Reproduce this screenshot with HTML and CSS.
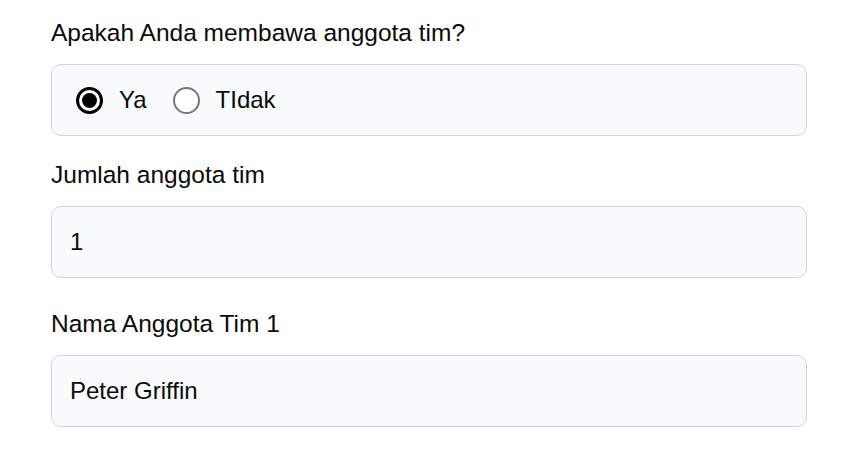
FILE: index.html
```html
<!DOCTYPE html>
<html lang="id">
<head>
<meta charset="utf-8">
<link rel="stylesheet" href="styles.css">
</head>
<body>
<form class="form">
  <div class="field field-first">
    <div class="label">Apakah Anda membawa anggota tim?</div>
    <div class="box radios">
      <label class="radio"><span class="dot checked"></span><span>Ya</span></label>
      <label class="radio"><span class="dot"></span><span>TIdak</span></label>
    </div>
  </div>
  <div class="field field-second">
    <div class="label">Jumlah anggota tim</div>
    <div class="box input">1</div>
  </div>
  <div class="field field-third">
    <div class="label">Nama Anggota Tim 1</div>
    <div class="box input">Peter Griffin</div>
  </div>
</form>
</body>
</html>
```
FILE: styles.css
```css
html, body {
  margin: 0;
  padding: 0;
  background: #ffffff;
}
body {
  font-family: "Liberation Sans", Arial, sans-serif;
  color: #0a0a0a;
}
.form {
  width: 756px;
  margin-left: 51px;
  padding-top: 18px;
}
.label {
  font-size: 24.5px;
  line-height: 30px;
  margin-bottom: 16px;
}
.field-second { margin-top: 24px; }
.field-third { margin-top: 31px; }
.box {
  box-sizing: border-box;
  height: 72px;
  border: 1px solid #d1d5db;
  border-radius: 10px;
  background: #f9fafb;
  font-size: 24px;
  display: flex;
  align-items: center;
}
.input {
  padding-left: 18px;
}
.radios {
  padding-left: 24px;
  gap: 26px;
}
.radio {
  display: flex;
  align-items: center;
  gap: 16px;
}
.dot {
  box-sizing: border-box;
  width: 27px;
  height: 27px;
  border-radius: 50%;
  border: 2px solid #767676;
  background: #ffffff;
  display: flex;
  align-items: center;
  justify-content: center;
}
.dot.checked {
  border: 3px solid #000000;
}
.dot.checked::after {
  content: "";
  width: 15px;
  height: 15px;
  border-radius: 50%;
  background: #000000;
}
```
